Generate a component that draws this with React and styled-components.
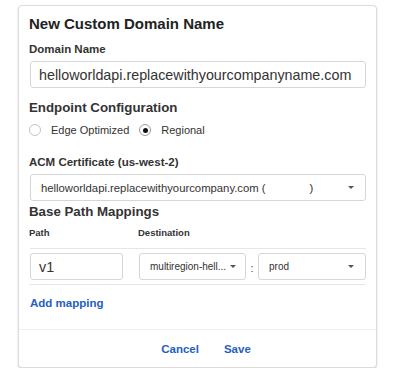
import React from "react";
import styled, { createGlobalStyle } from "styled-components";

const GlobalStyle = createGlobalStyle`
  html, body { margin: 0; padding: 0; background: #ffffff; }
  body { font-family: "Liberation Sans", Arial, sans-serif; color: #333; }
  * { box-sizing: border-box; }
`;

const Page = styled.div`
  padding: 5px 0 0 18px;
`;

const Card = styled.div`
  width: 359px;
  border: 1px solid #dcdcdc;
  border-radius: 4px;
  background: #fff;
  box-shadow: 0 1px 2px rgba(0, 0, 0, 0.18);
`;

const Body = styled.div`
  padding: 8px 10px 18px 11px;
  display: flex;
  flex-direction: column;
`;

const Title = styled.div`
  font-size: 15px;
  font-weight: bold;
  line-height: 20px;
  color: #222;
  margin-left: -1px;
`;

const Label = styled.div`
  font-size: 11.5px;
  font-weight: bold;
  line-height: 16px;
  color: #333;
  margin-top: ${(p) => p.$mt || 0}px;
  margin-left: -1px;
`;

const Section = styled.div`
  font-size: 13.3px;
  font-weight: bold;
  line-height: 18px;
  color: #333;
  margin-top: ${(p) => p.$mt || 0}px;
  margin-left: -1px;
`;

const TextBox = styled.div`
  height: 27px;
  margin-top: ${(p) => p.$mt || 0}px;
  border: 1px solid #d6d6d6;
  border-radius: 3px;
  padding: 0 8px;
  display: flex;
  align-items: center;
  font-size: 14.3px;
  color: #333;
  white-space: nowrap;
  overflow: hidden;
`;

const SelectBox = styled.div`
  height: 27px;
  margin-top: ${(p) => p.$mt || 0}px;
  border: 1px solid #d6d6d6;
  border-radius: 3px;
  padding: 0 9px 0 ${(p) => p.$pl || 10}px;
  display: flex;
  align-items: center;
  justify-content: space-between;
  font-size: ${(p) => p.$fs || 11.3}px;
  color: #333;
  white-space: nowrap;
  overflow: hidden;
`;

const Caret = styled.span`
  width: 0;
  height: 0;
  border-left: 3px solid transparent;
  border-right: 3px solid transparent;
  border-top: 3px solid #555;
  flex: none;
  margin-right: ${(p) => p.$mr || 0}px;
`;

const Blank = styled.span`
  display: inline-block;
  width: 44px;
`;

const RadioRow = styled.div`
  display: flex;
  align-items: center;
  height: 18px;
  margin-top: 4px;
`;

const RadioItem = styled.label`
  display: flex;
  align-items: center;
  gap: 10px;
  font-size: 11px;
  color: #333;
  margin-right: 11px;
`;

const RadioCircle = styled.span`
  width: 12px;
  height: 12px;
  border-radius: 50%;
  border: 1px solid ${(p) => (p.$on ? "#9a9a9a" : "#c4c4c4")};
  background: #fff;
  display: flex;
  align-items: center;
  justify-content: center;
  margin-left: -1px;
  &::after {
    content: "";
    width: 5px;
    height: 5px;
    border-radius: 50%;
    background: ${(p) => (p.$on ? "#111" : "transparent")};
  }
`;

const Grid = styled.div`
  display: grid;
  grid-template-columns: 93px 16px 107px 12px 1fr;
  align-items: center;
  margin-top: ${(p) => p.$mt || 0}px;
`;

const ColLabel = styled.div`
  font-size: 9.5px;
  font-weight: bold;
  line-height: 14px;
  color: #333;
  grid-column: ${(p) => p.$col};
  margin-left: -1px;
`;

const Divider = styled.div`
  height: 1px;
  background: #e6e6e6;
  margin-top: ${(p) => p.$mt || 0}px;
`;

const Colon = styled.div`
  font-size: 11px;
  color: #444;
  text-align: center;
  padding-top: 3px;
`;

const Cell = styled.div`
  grid-column: ${(p) => p.$col};
`;

const LinkText = styled.a`
  font-size: 11.5px;
  font-weight: bold;
  color: #1f60c0;
  text-decoration: none;
  line-height: 16px;
  cursor: pointer;
`;

const AddRow = styled.div`
  margin-top: 8px;
`;

const Footer = styled.div`
  border-top: 1px solid #efefef;
  height: 38px;
  display: flex;
  align-items: center;
  justify-content: center;
  gap: 25px;
  padding-left: 17px;
`;

export default function App() {
  return (
    <>
      <GlobalStyle />
      <Page>
        <Card>
          <Body>
            <Title>New Custom Domain Name</Title>
            <Label $mt={7}>Domain Name</Label>
            <TextBox $mt={4}>helloworldapi.replacewithyourcompanyname.com</TextBox>
            <Section $mt={11}>Endpoint Configuration</Section>
            <RadioRow>
              <RadioItem>
                <RadioCircle />
                Edge Optimized
              </RadioItem>
              <RadioItem>
                <RadioCircle $on />
                Regional
              </RadioItem>
            </RadioRow>
            <Label $mt={15}>ACM Certificate (us-west-2)</Label>
            <SelectBox $mt={4}>
              <span>
                helloworldapi.replacewithyourcompany.com (<Blank />)
              </span>
              <Caret $mr={2} />
            </SelectBox>
            <Section $mt={2}>Base Path Mappings</Section>
            <Grid $mt={5}>
              <ColLabel $col={1}>Path</ColLabel>
              <ColLabel $col={3}>Destination</ColLabel>
            </Grid>
            <Divider $mt={8} />
            <Grid $mt={4}>
              <Cell $col={1}>
                <TextBox>v1</TextBox>
              </Cell>
              <Cell $col={3}>
                <SelectBox $fs={10} $pl={10}>
                  <span>multiregion-hell...</span>
                  <Caret />
                </SelectBox>
              </Cell>
              <Colon>:</Colon>
              <Cell $col={5}>
                <SelectBox $fs={10} $pl={10}>
                  <span>prod</span>
                  <Caret $mr={2} />
                </SelectBox>
              </Cell>
            </Grid>
            <Divider $mt={4} />
            <AddRow>
              <LinkText>Add mapping</LinkText>
            </AddRow>
          </Body>
          <Footer>
            <LinkText>Cancel</LinkText>
            <LinkText>Save</LinkText>
          </Footer>
        </Card>
      </Page>
    </>
  );
}
